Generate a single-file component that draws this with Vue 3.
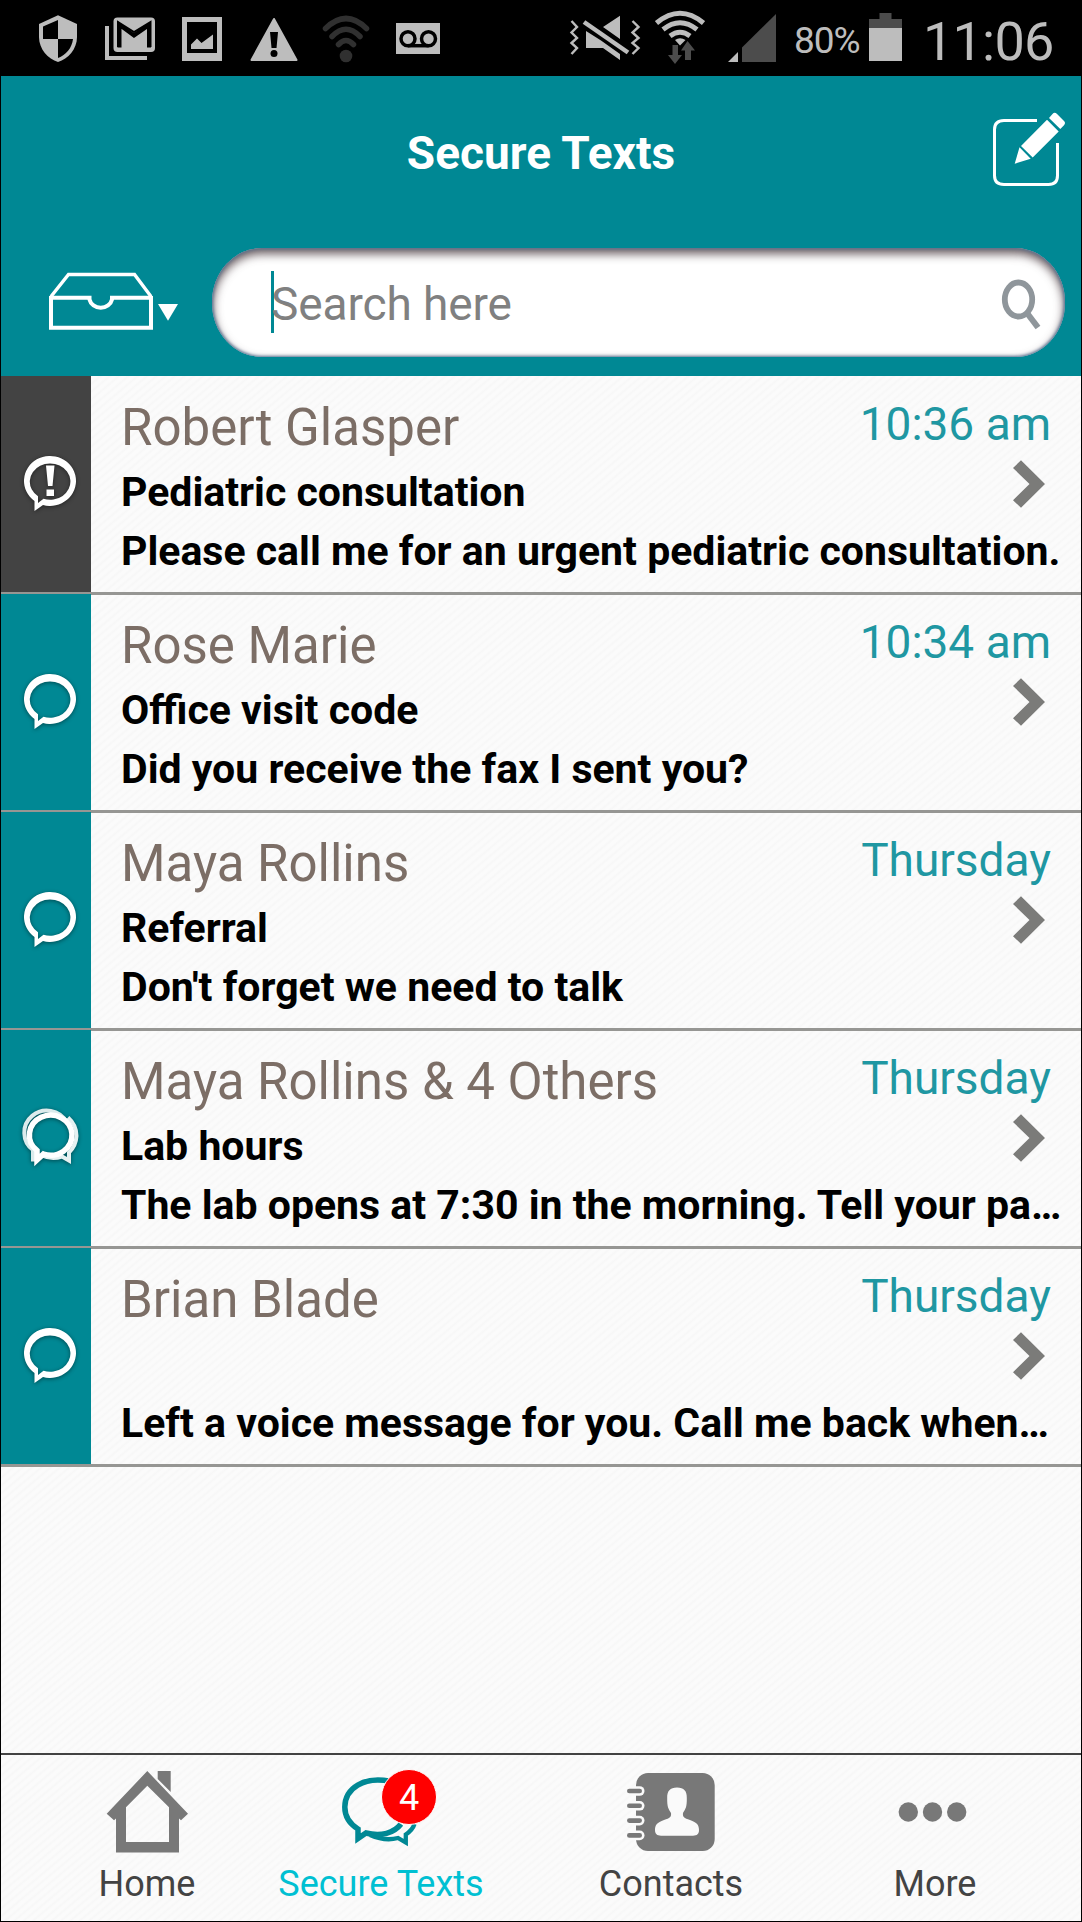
<template>
  <div class="screen">
    <header class="status-bar">
      <div class="status-left">
        <svg width="44" height="76" viewBox="36 0 44 76">
          <path fill="#bdbdbd" d="M58 15.300L77 24V37C77 49 68 59 58 62C48 59 39 49 39 37V24Z" />
          <path d="M58 20V39H43V26.500ZM58 39H73C72 48 66 55 58 58Z" />
        </svg>
        <svg width="53" height="76" viewBox="104 0 53 76">
          <path fill="none" stroke="#bdbdbd" stroke-width="4" d="M107 26V58H147" />
          <rect x="113.500" y="17.500" width="41.500" height="34.500" rx="4" fill="#bdbdbd" />
          <path fill="none" stroke="#000" stroke-width="4" d="M119.500 47.500V25L134 35.500L149 25V47.500" />
          <path fill="none" stroke="#000" stroke-width="2" d="M118 47V22L134 32L150.500 22V47" />
        </svg>
        <svg width="43" height="76" viewBox="181 0 43 76">
          <rect x="182" y="17" width="40" height="44" fill="#bdbdbd" />
          <rect x="187" y="22" width="30" height="31" />
          <path fill="#bdbdbd" d="M191 49V44.500L197 38.500L201.500 43L213 34.500V49Z" />
        </svg>
        <svg width="50" height="76" viewBox="248 0 50 76">
          <path fill="#bdbdbd" stroke="#bdbdbd" stroke-width="2" stroke-linejoin="round" d="M274 19L296.500 60H251.500Z" />
          <path d="M270 32H278L276.500 48H271.500Z" />
          <circle cx="274" cy="53.500" r="3.500" />
        </svg>
        <svg width="48" height="76" viewBox="322 0 48 76">
          <g fill="none" stroke="#303030" stroke-width="5.500" stroke-linecap="round">
            <path d="M325.500 28.500Q346 8.500 366.500 28.500" />
            <path d="M332 36.500Q346 22 360 36.500" />
            <path d="M338.500 44.500Q346 36.500 353.500 44.500" />
          </g>
          <circle cx="346" cy="56" r="6.300" fill="#303030" />
        </svg>
        <svg width="48" height="76" viewBox="394 0 48 76">
          <rect x="396" y="23" width="44" height="31" fill="#bdbdbd" />
          <g fill="none" stroke="#000" stroke-width="3.500">
            <circle cx="408" cy="38.700" r="7" />
            <circle cx="428.500" cy="38.700" r="7" />
            <path d="M408 45.700H428.500" />
          </g>
        </svg>
      </div>

      <div class="status-right">
        <svg width="72" height="76" viewBox="569 0 72 76">
          <path fill="#bdbdbd" d="M586 31L601 40.500L620 54V60L603 48H586ZM603 27L620 15.700V39Z" />
          <path stroke="#bdbdbd" stroke-width="4.500" d="M584 22L628 52.500" />
          <g fill="none" stroke="#bdbdbd" stroke-width="2.400">
            <path d="M571.500 21L577 27L571.500 32.500L577 38L571.500 43L577 48L571.500 54" />
            <path d="M632.500 21L638.500 27L632.500 32.500L638.500 38L632.500 43L638.500 48L632.500 54" />
          </g>
        </svg>
        <svg width="50" height="76" viewBox="655 0 50 76">
          <g fill="none" stroke="#bdbdbd" stroke-width="5">
            <path d="M656.500 23Q680 3.500 703.500 23" />
            <path d="M663 29.500Q680 16 697 29.500" />
            <path d="M670 36Q680 28.500 690 36" />
          </g>
          <path fill="#bdbdbd" d="M675 40Q680 36.500 685.500 40L680 45.500Z" />
          <path fill="#4c4c4c" d="M672.500 45H678V55H682L675 64L668 55H672.500ZM687.500 41L695 50.500H691V60H685V50.500H681Z" />
        </svg>
        <svg width="49" height="76" viewBox="728 0 49 76">
          <path fill="#bdbdbd" d="M728 62L738 52V62Z" />
          <path fill="#4c4c4c" d="M742 62V47.500L776 14V62Z" />
        </svg>
        <span class="percent">80%</span>
        <svg width="33" height="76" viewBox="869 0 33 76">
          <path fill="#4c4c4c" d="M869 28V19H879.500V13H891.500V19H902V28Z" />
          <rect x="869" y="28" width="33" height="33" fill="#bdbdbd" />
        </svg>
        <span class="clock">11:06</span>
      </div>
    </header>

    <div class="app-header">
      <div class="title-row">
        <h1>Secure Texts</h1>
        <svg class="compose" width="76" height="76" viewBox="991 111 76 76">
          <path fill="none" stroke="#fff" stroke-width="3" d="M1037 120.500H1004Q994.500 120.500 994.500 129.500V175.500Q994.500 184.500 1004 184.500H1048.500Q1057.500 184.500 1057.500 175.500V143" />
          <path fill="#fff" d="M1014.700 163.700L1019.500 147.300L1030.700 158.700ZM1021 146L1047 119.800L1058.700 131.400L1032.700 157.500ZM1049 118L1052.500 114Q1054.500 111.800 1056.800 113.800L1064 121Q1066 123 1064 125.200L1060.300 129Z" />
        </svg>
      </div>
      <div class="search-row">
        <svg class="tray" width="134" height="62" viewBox="47 271 134 62">
          <g fill="none" stroke="#fff">
            <path stroke-width="4" d="M51 297.700H89.500V299.500A11.500 10.500 0 0 0 112 299.500V297.700H151" />
            <path stroke-width="4" d="M51 296V327.700H151V296" />
            <path stroke-width="3.400" d="M51 296.500L68.500 274.500H134.500L151 296.500" />
          </g>
          <path fill="#fff" d="M158 304H178L168 320.700Z" />
        </svg>
        <div class="search">
          <span class="caret"></span>
          <span class="placeholder">Search here</span>
          <svg width="42" height="54" viewBox="1000 277 42 54">
            <ellipse cx="1019.500" cy="300.500" rx="13.700" ry="17" fill="none" stroke="#8f969b" stroke-width="5.800" />
            <path stroke="#8f969b" stroke-width="6" d="M1028.200 314.200L1039 328.500" />
          </svg>
        </div>
      </div>
    </div>

    <main class="list">
      <div class="row" v-for="(m, i) in messages" :key="i">
        <div :class="['side', { urgent: m.kind === 'urgent' }]">
          <svg width="90" height="216" viewBox="1 0 90 216">
            <g v-if="m.kind === 'group'" fill="none">
              <path stroke="#dcebec" stroke-width="4" d="M33 131.500V120A22.500 22 0 1 1 66.500 92" />
              <path stroke="#e6f1f1" stroke-width="4" d="M68 87.500Q76.500 95 76.500 106Q76 116 69 122.500V130.500L62 126.500Q52 130 42 125.500" />
              <path stroke="#fff" stroke-width="5.500" d="M37 130V120.500A21.300 20 0 1 1 43.500 124Z" />
            </g>
            <path v-else fill="#fff" fill-rule="evenodd" :d="bubble" />
            <path v-if="m.kind === 'urgent'" fill="#fff" d="M46 89.500H54.500L52.500 110H48ZM46.500 113.500H54V120H46.500Z" />
          </svg>
        </div>
        <div class="body">
          <div class="text">
            <div class="name">{{ m.name }}</div>
            <div class="subject">{{ m.subject }}</div>
            <div class="preview">{{ m.preview }}</div>
          </div>
          <div class="meta">
            <span class="time">{{ m.time }}</span>
            <svg width="33" height="48" viewBox="1013 459.500 33 48">
              <path fill="#7b7b79" d="M1013 467.500L1021 459.700L1045 483.400L1021 507.300L1013 499.700L1029.500 483.400Z" />
            </svg>
          </div>
        </div>
      </div>
    </main>

    <nav class="tabs">
      <div class="tab">
        <svg width="84" height="90" viewBox="105 1765 84 90">
          <path fill="#787878" fill-rule="evenodd" d="M147.300 1771L188 1813.700L181 1820.300L179 1818.500V1852.500H116V1818.500L114 1820.300L106.700 1813.700ZM147.300 1785.700L126 1807.300V1842H169V1807.300Z" />
          <path fill="#787878" d="M157.700 1771H170.700V1792L157.700 1779Z" />
        </svg>
        <span>Home</span>
      </div>
      <div class="tab active">
        <svg width="100" height="90" viewBox="331 1765 100 90">
          <g fill="none" stroke="#008894" stroke-width="5.500">
            <path d="M390 1781.200C364 1776 345 1788 344.800 1807C344.800 1817 350 1824 358 1829V1838.500L366 1833C381 1837 394 1833 401 1824" />
            <path stroke-width="4.300" d="M370 1835Q385 1841.500 398 1838L405.800 1842.500V1834.500Q412.500 1830 414.500 1824" />
          </g>
        </svg>
        <span class="badge">4</span>
        <span>Secure Texts</span>
      </div>
      <div class="tab">
        <svg width="92" height="90" viewBox="625 1765 92 90">
          <rect x="636" y="1773" width="78.700" height="78" rx="12" fill="#787878" />
          <g v-for="n in 4" :key="n">
            <rect x="625" :y="1771.400 + n * 14.800" width="19.500" height="9.600" rx="4.800" fill="#fafafa" />
            <rect x="627" :y="1773.900 + n * 14.800" width="15" height="4.600" rx="2.300" fill="#787878" />
          </g>
          <path fill="#fafafa" d="M677 1787.500C684 1787.500 687 1791 686.800 1798C687 1807 685.500 1809 683 1813C682.500 1817 684 1818 690 1820C697 1822.500 699 1825 699 1830C699 1834 697 1835.700 693 1835.700H661C657 1835.700 655 1834 655 1830C655 1825 657 1822.500 664 1820C670 1818 671.500 1817 671 1813C668.500 1809 667 1807 667.200 1798C667 1791 670 1787.500 677 1787.500Z" />
        </svg>
        <span>Contacts</span>
      </div>
      <div class="tab">
        <svg width="75" height="90" viewBox="898 1765 75 90">
          <circle v-for="n in 3" :key="n" :cx="884.100 + n * 24.200" cy="1812" r="9.700" fill="#787878" />
        </svg>
        <span>More</span>
      </div>
    </nav>
  </div>
</template>

<script setup>
// speech bubble outline, shared by the plain and the urgent rows
const bubble =
  'M34.500 135V125A26 25 0 1 1 43 129L34.500 135ZM38 127L43.500 122.800A20.300 18.200 0 1 0 38 120.200Z'

const messages = [
  {
    name: 'Robert Glasper',
    subject: 'Pediatric consultation',
    preview: 'Please call me for an urgent pediatric consultation.',
    time: '10:36 am',
    kind: 'urgent',
  },
  {
    name: 'Rose Marie',
    subject: 'Office visit code',
    preview: 'Did you receive the fax I sent you?',
    time: '10:34 am',
    kind: 'single',
  },
  {
    name: 'Maya Rollins',
    subject: 'Referral',
    preview: "Don't forget we need to talk",
    time: 'Thursday',
    kind: 'single',
  },
  {
    name: 'Maya Rollins & 4 Others',
    subject: 'Lab hours',
    preview: 'The lab opens at 7:30 in the morning. Tell your pa…',
    time: 'Thursday',
    kind: 'group',
  },
  {
    name: 'Brian Blade',
    subject: '',
    preview: 'Left a voice message for you. Call me back when…',
    time: 'Thursday',
    kind: 'single',
  },
]
</script>

<style>
body {
  background: #fafafa;
}
</style>

<style scoped>
.screen {
  display: flex;
  flex-direction: column;
  width: 1082px;
  height: 1922px;
  box-sizing: border-box;
  border: 1px solid #000;
  border-top: 0;
  overflow: hidden;
  font-family: Roboto, 'Liberation Sans', sans-serif;
  background: repeating-linear-gradient(140deg, #fbfbfb 0, #fbfbfb 2px, #f7f7f7 4px, #fbfbfb 6px);
}

svg {
  display: block;
  flex: none;
}

.status-bar {
  display: flex;
  justify-content: space-between;
  height: 76px;
  flex: none;
  background: #000;
  color: #bdbdbd;
}

.status-left {
  display: flex;
  gap: 24px;
  padding-left: 35px;
}

.status-right {
  display: flex;
  padding-right: 29px;
}

.status-right svg:nth-child(2) {
  margin-left: 14px;
}

.status-right svg:nth-child(3) {
  margin-left: 23px;
}

.percent {
  width: 92px;
  box-sizing: border-box;
  padding-left: 17px;
  font-size: 37px;
  line-height: 82px;
  letter-spacing: -1px;
}

.clock {
  width: 150px;
  box-sizing: border-box;
  padding-left: 21px;
  font-size: 54px;
  line-height: 83px;
  letter-spacing: -0.8px;
  white-space: nowrap;
}

.app-header {
  height: 300px;
  flex: none;
  background: #008894;
}

.title-row {
  display: flex;
  align-items: center;
  height: 154px;
  padding: 0 14px 0 90px;
}

h1 {
  flex: 1;
  margin: 0;
  font-size: 46px;
  line-height: 154px;
  font-weight: 700;
  text-align: center;
  color: #fff;
}

.compose {
  margin-top: -8px;
}

.search-row {
  display: flex;
  padding: 18px 16px 0 46px;
}

.tray {
  margin-top: 23px;
}

.search {
  display: flex;
  align-items: center;
  width: 853px;
  height: 109px;
  margin-left: auto;
  box-sizing: border-box;
  padding: 0 24px 0 59px;
  border-radius: 50px / 54px;
  background: #fff;
  box-shadow: inset 0 0 3px 1px #5c7595, inset 0 5px 10px 1px rgba(70, 55, 60, 0.8);
}

.caret {
  width: 3px;
  height: 62px;
  margin-top: -1px;
  background: #008894;
}

.placeholder {
  flex: 1;
  margin-left: -3px;
  padding-top: 4px;
  font-size: 46px;
  line-height: 105px;
  letter-spacing: -0.1px;
  color: #808080;
}

.list {
  flex: none;
  height: 1377px;
}

.row {
  display: flex;
  height: 218px;
  box-sizing: border-box;
  border-bottom: 2px solid #969693;
}

.row:last-child {
  height: 219px;
  border-bottom-width: 3px;
}

.side {
  width: 90px;
  flex: none;
  background: #008894;
}

.side.urgent {
  background: #434343;
}

.side svg {
  filter: drop-shadow(0 1px 2px rgba(0, 0, 0, 0.45));
}

.body {
  display: flex;
  flex: 1;
  min-width: 0;
  box-sizing: border-box;
}

.row + .row .body {
  border-top: 1px solid #969693;
}

.row + .row .text,
.row + .row .meta {
  margin-top: -1px;
}

.text {
  flex: 1;
  min-width: 0;
  padding: 22px 0 0 30px;
  white-space: nowrap;
}

.name {
  height: 64px;
  font-size: 51px;
  line-height: 60px;
  color: #7c6e66;
}

.subject,
.preview {
  height: 59px;
  font-size: 41px;
  line-height: 60px;
  font-weight: 700;
  color: #000;
}

.meta {
  display: flex;
  flex-direction: column;
  align-items: flex-end;
  width: 0;
  padding: 18px 30px 0 0;
  white-space: nowrap;
}

.time {
  font-size: 46px;
  line-height: 60px;
  color: #1f97a2;
}

.meta svg {
  margin: 6px 5px 0 0;
}

.tabs {
  display: flex;
  height: 168px;
  box-sizing: border-box;
  border-top: 2px solid #434343;
}

.tab {
  display: flex;
  flex-direction: column;
  align-items: center;
  position: relative;
  width: 210px;
  padding-top: 10px;
  margin-left: 41px;
  font-size: 36px;
  line-height: 58px;
  color: #434343;
  white-space: nowrap;
}

.tab:nth-child(2) {
  margin-left: 24px;
}

.tab:nth-child(3) {
  margin-left: 80px;
}

.tab:nth-child(4) {
  margin-left: 54px;
}

.tab.active {
  color: #00c0d2;
}

.badge {
  position: absolute;
  top: 14px;
  left: 105px;
  width: 54px;
  height: 54px;
  border: 1px solid #fff;
  border-radius: 50%;
  background: #f00;
  color: #fff;
  text-align: center;
  line-height: 57px;
}
</style>
